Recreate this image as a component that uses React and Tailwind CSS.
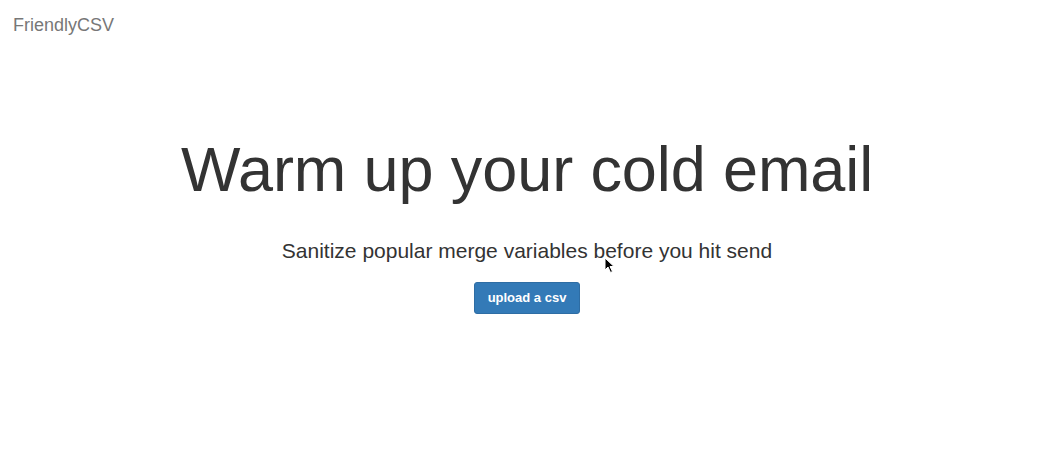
export default function App() {
  return (
    <div className="relative h-[474px] w-[1054px] overflow-hidden bg-white font-['Liberation_Sans',Helvetica,Arial,sans-serif] text-[#333]">
      <nav className="flex h-[50px] items-center px-[13px]">
        <span className="text-[18px] leading-5 text-[#777]">FriendlyCSV</span>
      </nav>

      <main className="flex flex-col items-center pt-[85px]">
        <h1 className="text-[63px] leading-[69px] tracking-[-0.1px] text-[#333]">Warm up your cold email</h1>
        <p className="mt-[32px] text-[21px] leading-[30px] text-[#333]">
          Sanitize popular merge variables before you hit send
        </p>
        <button
          type="button"
          className="mt-[16px] h-[32px] rounded-[3px] border border-[#2e6da4] bg-[#337ab7] px-[13px] text-[13px] font-bold text-white"
        >
          upload a csv
        </button>
      </main>

      <svg className="absolute left-[604px] top-[257px]" width="11" height="17" viewBox="0 0 11 17">
        <path d="M1 1 L1 13 L4 10 L6.5 15.5 L8.5 14.5 L6 9.5 L10 9.5 Z" fill="#000" stroke="#fff" strokeWidth="1" />
      </svg>
    </div>
  );
}
